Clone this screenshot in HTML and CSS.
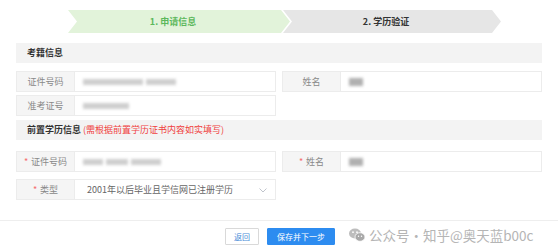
FILE: index.html
```html
<!DOCTYPE html>
<html lang="zh">
<head>
<meta charset="utf-8">
<link rel="stylesheet" href="styles.css">
</head>
<body>
<div class="page">
  <div class="steps">
    <div class="step step-active">1. 申请信息</div>
    <div class="step step-next">2. 学历验证</div>
  </div>
  <div class="content">
    <div class="section-title">考籍信息</div>
    <div class="grid first">
      <div class="field"><div class="label">证件号码</div><div class="input"><span class="blur w60"></span><span class="blur w30"></span></div></div>
      <div class="field"><div class="label">姓名</div><div class="input"><span class="blur w14"></span></div></div>
    </div>
    <div class="grid second">
      <div class="field"><div class="label">准考证号</div><div class="input"><span class="blur w46"></span></div></div>
    </div>
    <div class="section-title">前置学历信息 <span class="hint">(需根据前置学历证书内容如实填写)</span></div>
    <div class="grid third">
      <div class="field"><div class="label"><i>*</i> 证件号码</div><div class="input"><span class="blur w20"></span><span class="blur w22"></span><span class="blur w30"></span></div></div>
      <div class="field"><div class="label"><i>*</i> 姓名</div><div class="input"><span class="blur w14"></span></div></div>
    </div>
    <div class="grid fourth">
      <div class="field"><div class="label"><i>*</i> 类型</div><div class="input select">2001年以后毕业且学信网已注册学历<svg class="caret" width="8" height="5" viewBox="0 0 8 5"><path d="M0.5 0.5 L4 4 L7.5 0.5" fill="none" stroke="#c0c4cc" stroke-width="1"/></svg></div></div>
    </div>
  </div>
  <div class="footer">
    <button class="btn btn-plain">返回</button>
    <button class="btn btn-primary">保存并下一步</button>
    <div class="watermark">
      <svg width="16" height="14" viewBox="0 0 16 14"><ellipse cx="6" cy="5.5" rx="6" ry="5" fill="#bdbdbd"/><ellipse cx="11" cy="9" rx="5" ry="4.3" fill="#a9a9a9" stroke="#fff" stroke-width="0.8"/><circle cx="4" cy="4.2" r="0.9" fill="#fff"/><circle cx="8" cy="4.2" r="0.9" fill="#fff"/><circle cx="9.5" cy="8.3" r="0.7" fill="#fff"/><circle cx="12.5" cy="8.3" r="0.7" fill="#fff"/></svg>
      <span>公众号·知乎@奥天蓝b00c</span>
    </div>
  </div>
</div>
</body>
</html>
```
FILE: styles.css
```css
* { box-sizing: border-box; }
body {
  margin: 0;
  background: #fff;
  font-family: "Noto Sans CJK SC", "Noto Sans", sans-serif;
  color: #555;
}
.page { width: 558px; height: 251px; overflow: hidden; }
.steps {
  display: flex;
  padding: 10px 0 0 68px;
  height: 33px;
}
.step {
  height: 23px;
  line-height: 23px;
  font-size: 9px;
  font-weight: bold;
  text-align: center;
  clip-path: polygon(0 0, calc(100% - 9px) 0, 100% 50%, calc(100% - 9px) 100%, 0 100%, 9px 50%);
}
.step-active {
  width: 222px;
  background: #e2f3da;
  color: #5cb85c;
  padding-right: 12px;
}
.step-next {
  width: 218px;
  margin-left: -7px;
  background: #e6e6e6;
  color: #333;
  padding-right: 12px;
}
.content { padding: 10px 16px 0 16px; }
.section-title {
  height: 20px;
  line-height: 20px;
  background: #f3f3f3;
  padding-left: 11px;
  font-size: 9px;
  font-weight: bold;
  color: #333;
}
.hint { color: #f04040; font-weight: normal; }
.grid {
  display: grid;
  grid-template-columns: 260px 260px;
  column-gap: 6px;
}
.grid.first { margin-top: 8px; }
.grid.second { margin-top: 3px; margin-bottom: 4px; }
.grid.third { margin-top: 11px; }
.grid.fourth { margin-top: 7px; }
.field {
  display: flex;
  height: 21px;
  border: 1px solid #ececec;
}
.label {
  width: 58px;
  flex: none;
  background: #f5f5f5;
  border-right: 1px solid #ececec;
  font-size: 9px;
  color: #888;
  display: flex;
  align-items: center;
  justify-content: center;
}
.label i { font-style: normal; color: #f56c6c; margin-right: 3px; }
.input {
  flex: 1;
  display: flex;
  align-items: center;
  padding-left: 8px;
  gap: 3px;
  font-size: 9px;
  color: #666;
  background: #fff;
}
.select { position: relative; padding-left: 12px; }
.caret { position: absolute; right: 8px; top: 8px; }
.blur {
  display: inline-block;
  height: 6px;
  background: #cfcfcf;
  filter: blur(1.8px);
}
.w14 { width: 14px; height: 8px; background: #b0b0b0; }
.w20 { width: 20px; }
.w22 { width: 22px; }
.w30 { width: 30px; }
.w46 { width: 46px; }
.w60 { width: 60px; }
.footer {
  margin-top: 20px;
  border-top: 1px solid #eeeeee;
  display: flex;
  align-items: center;
  padding: 7px 0 0 225px;
  gap: 8px;
}
.btn {
  height: 17px;
  font-size: 8px;
  font-family: inherit;
  border-radius: 1px;
  padding: 0;
  cursor: pointer;
}
.btn-plain {
  width: 34px;
  background: #fff;
  border: 1px solid #d9d9d9;
  color: #4a8cd8;
}
.btn-primary {
  width: 68px;
  background: #2d8cf0;
  border: 1px solid #2d8cf0;
  color: #fff;
}
.watermark {
  display: flex;
  align-items: center;
  gap: 4px;
  margin-left: 6px;
  margin-top: -4px;
  font-size: 13.5px;
  color: #b5b5b5;
  white-space: nowrap;
}
```
